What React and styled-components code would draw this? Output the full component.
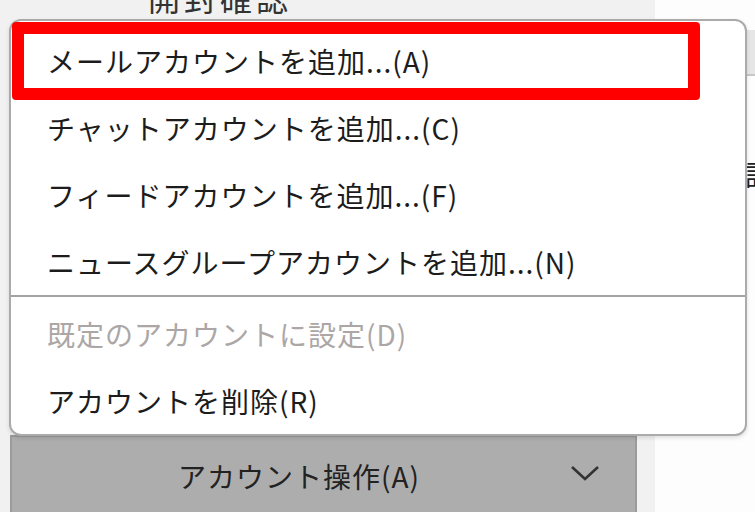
import React from 'react';
import styled, { createGlobalStyle } from 'styled-components';

const GlobalStyle = createGlobalStyle`
  html, body {
    margin: 0;
    padding: 0;
    background: #fdfdfd;
  }
  body {
    font-family: "Noto Sans CJK JP", "Noto Sans", sans-serif;
  }
`;

const Page = styled.div`
  position: relative;
  width: 755px;
  height: 512px;
  overflow: hidden;
  display: grid;
  grid-template-columns: 655px 1fr;
`;

const LeftPane = styled.div`
  background: #f1f1f1;
  display: flex;
  flex-direction: column;
  justify-content: space-between;
`;

const TopLabel = styled.div`
  margin: -21px 0 0 148px;
  font-size: 32px;
  line-height: 36px;
  letter-spacing: 4px;
  color: #333;
`;

const AccountButton = styled.button`
  box-sizing: border-box;
  width: 627px;
  height: 80px;
  margin: 0 0 -3px 10px;
  padding: 0 35px 0 166px;
  display: flex;
  align-items: center;
  justify-content: space-between;
  background: #adadad;
  border: 2px solid #9b9b9b;
  border-bottom: none;
  font-family: inherit;
  font-size: 28px;
  letter-spacing: 1px;
  color: #222;
  cursor: default;
`;

const Chevron = styled.svg`
  width: 30px;
  height: 18px;
  margin-top: -6px;
`;

const RightPane = styled.div`
  background: #fdfdfd;
  padding: 30px 0 0 90px;
  display: flex;
  flex-direction: column;
  gap: 80px;
`;

const RightHeader = styled.div`
  height: 44px;
  background: #e6e6e6;
  border-left: 2px solid #cfcfcf;
  border-bottom: 2px solid #c8c8c8;
`;

const RightText = styled.div`
  font-size: 28px;
  line-height: 36px;
  color: #222;
  white-space: nowrap;
`;

const Menu = styled.div`
  position: absolute;
  left: 9px;
  top: 19px;
  width: 738px;
  box-sizing: border-box;
  padding: 6px 0 0;
  background: #ffffff;
  border: 2px solid #ababab;
  border-radius: 12px;
  box-shadow: 0 2px 4px rgba(0, 0, 0, 0.12);
`;

const Item = styled.div`
  height: 67px;
  padding-left: 36px;
  display: flex;
  align-items: center;
  font-size: 28px;
  letter-spacing: 1px;
  color: ${(p) => (p.$disabled ? '#aca7a6' : '#1c1c1c')};
  white-space: nowrap;
`;

const Separator = styled.div`
  height: 2px;
  margin: 0 0 3px;
  background: #a3a3a3;
`;

const Marker = styled.div`
  position: absolute;
  left: 12px;
  top: 22px;
  width: 688px;
  height: 78px;
  box-sizing: border-box;
  border: 12px solid #ff0000;
  border-radius: 4px;
  pointer-events: none;
`;

const topItems = [
  'メールアカウントを追加...(A)',
  'チャットアカウントを追加...(C)',
  'フィードアカウントを追加...(F)',
  'ニュースグループアカウントを追加...(N)',
];

const App = () => (
  <>
    <GlobalStyle />
    <Page>
      <LeftPane>
        <TopLabel>開封確認</TopLabel>
        <AccountButton>
          <span>アカウント操作(A)</span>
          <Chevron viewBox="0 0 30 18">
            <path d="M2 3 L15 15 L28 3" fill="none" stroke="#333" strokeWidth="2.6" />
          </Chevron>
        </AccountButton>
      </LeftPane>
      <RightPane>
        <RightHeader />
        <RightText>設定</RightText>
      </RightPane>

      <Menu>
        {topItems.map((label) => (
          <Item key={label}>{label}</Item>
        ))}
        <Separator />
        <Item $disabled>既定のアカウントに設定(D)</Item>
        <Item>アカウントを削除(R)</Item>
      </Menu>
      <Marker />
    </Page>
  </>
);

export default App;
